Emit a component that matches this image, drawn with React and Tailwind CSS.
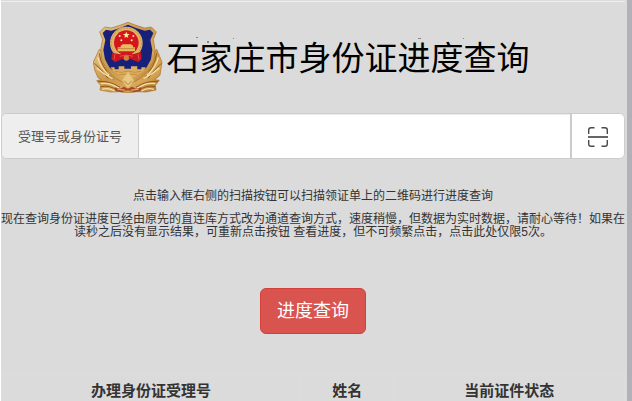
import React, { useState } from "react";

const columns = [
  { name: "办理身份证受理号", width: "w-[48%]" },
  { name: "姓名", width: "w-[15%]" },
  { name: "当前证件状态", width: "w-[37%]" },
];

const Emblem = () => (
  <svg viewBox="39 36 210 213" className="h-[71px] w-[70px] shrink-0" aria-hidden="true">
    <defs>
      <linearGradient id="gold" x1="0" y1="0" x2="1" y2="1">
        <stop offset="0" stopColor="#e6c48a" />
        <stop offset="0.45" stopColor="#c9974a" />
        <stop offset="0.7" stopColor="#d9aa5c" />
        <stop offset="1" stopColor="#a8661c" />
      </linearGradient>
    </defs>
    {/* branches on both sides */}
    <path
      d="M58 118 L40 156 L44 180 L54 203 L64 209 L50 212 L62 226 L60 240 L92 246 L120 245 L144 249 L168 245 L198 246 L228 240 L226 226 L238 211 L224 209 L240 196 L246 156 L230 118 L205 150 L144 190 L82 150Z"
      fill="url(#gold)"
      stroke="#a86f28"
      strokeWidth="2"
    />
    <g fill="none" stroke="#8f5716" strokeWidth="3">
      <path d="M58 130 Q62 170 100 208 M44 160 Q66 180 84 205 M54 214 Q90 212 120 232 M62 230 Q90 224 112 242" />
      <path d="M230 130 Q226 170 188 208 M244 160 Q222 180 204 205 M234 214 Q198 212 168 232 M226 230 Q198 224 176 242" />
    </g>
    <g fill="none" stroke="#f4dfa8" strokeWidth="4">
      <path d="M53 142 Q60 172 88 196 M50 174 Q70 192 98 206 M62 221 Q90 216 118 236 M66 238 Q84 232 104 243" />
      <path d="M235 142 Q228 172 200 196 M238 174 Q218 192 190 206 M226 221 Q198 216 170 236 M222 238 Q204 232 184 243" />
    </g>
    {/* shield */}
    <path
      d="M144 37 L168 46 L194 54 L214 51 L229 66 L220 88 L225 118 L222 150 L208 180 L180 206 L144 224 L108 206 L80 180 L66 150 L62 118 L68 88 L59 66 L74 51 L94 54 L120 46Z"
      fill="url(#gold)"
      stroke="#a97228"
      strokeWidth="2"
    />
    <path
      d="M144 44 L168 54 L194 62 L210 59 L220 69 L211 90 L217 120 L213 148 L200 172 L176 192 L144 207 L112 192 L88 172 L75 148 L70 120 L76 90 L68 69 L78 59 L94 62 L120 54Z"
      fill="#17217a"
    />
    {/* state emblem */}
    <circle cx="139" cy="99" r="49" fill="#e0b468" />
    <circle cx="139" cy="99" r="45" fill="none" stroke="#b78239" strokeWidth="2" strokeDasharray="6 4" />
    <circle cx="139" cy="98" r="37" fill="#d5171d" />
    <path d="M139 65 L142 72 L149 72 L143 77 L145 84 L139 80 L133 84 L135 77 L129 72 L136 72Z" fill="#ffe7a0" />
    <g fill="#ffe2a0">
      <circle cx="119" cy="78" r="3" />
      <circle cx="160" cy="78" r="3" />
      <circle cx="124" cy="91" r="3" />
      <circle cx="155" cy="91" r="3" />
    </g>
    <path d="M122 107 L128 103 H153 L159 107 V112 H165 V124 H113 V112 H122Z" fill="#e8bd62" />
    <path d="M114 116 H164" stroke="#b06d22" strokeWidth="2" />
    <path d="M96 128 L120 133 L139 129 L158 133 L183 126 L185 146 L176 157 L151 147 L139 151 L127 147 L105 157 L94 147Z" fill="#c91520" />
    <path d="M105 132 L102 149 M174 132 L177 149 M119 139 L139 135 L159 139" stroke="#e75142" strokeWidth="3" fill="none" />
    <circle cx="139" cy="144" r="8" fill="#d5803f" />
    {/* wall and centre of the base */}
    <path d="M92 172 H104 V178 H116 V169 H133 V176 H153 V169 H172 V178 H184 V172 H197 L190 184 L168 199 L144 210 L120 199 L100 184Z" fill="#dcae5e" />
    <path d="M105 184 L124 187 L144 183 L164 187 L184 184 M116 194 L144 192 L172 194" fill="none" stroke="#b98138" strokeWidth="2" />
    <path d="M144 186 L126 212 L144 234 L162 212Z" fill="#e9c981" />
    <path d="M132 212 L144 224 L156 212" fill="none" stroke="#b27a32" strokeWidth="3" />
    <path d="M104 232 L120 236 L132 230 L144 236 L156 230 L168 236 L184 232 L182 243 L163 247 L144 241 L125 247 L106 243Z" fill="#a4482a" />
    <path d="M112 237 L136 241 M176 237 L152 241" stroke="#e3a450" strokeWidth="4" />
  </svg>
);

const ScanIcon = () => (
  <svg viewBox="0 0 20 20" className="h-5 w-5" fill="none" stroke="#4a4a4a" strokeWidth="1.4" aria-hidden="true">
    <path d="M0.7 7V3Q0.7 0.7 3 0.7H6.5 M13.5 0.7H17Q19.3 0.7 19.3 3V7 M0.7 13V17Q0.7 19.3 3 19.3H6.5 M13.5 19.3H17Q19.3 19.3 19.3 17V13" />
    <path d="M0 10H20" strokeWidth="2" stroke="#666666" />
  </svg>
);

const App = () => {
  const [number, setNumber] = useState("");

  return (
    <div className="min-h-screen border-l border-white bg-[#b1b1b7] pr-[5px] font-['Liberation_Sans','Noto_Sans_CJK_SC',sans-serif] text-[#333333]">
      <main className="min-h-screen bg-[#dbdbdb] pt-px pr-0.5">
        <header className="relative flex items-center justify-center gap-1 border-t border-[#efefef] py-5 pr-1">
          <Emblem />
          <h1 className="pt-0.5 text-[33px] leading-10 text-black">石家庄市身份证进度查询</h1>
          {/* specks over the title */}
          <svg viewBox="0 0 270 8" className="absolute top-[34px] left-[195px] h-2 w-[270px]" fill="#888888" aria-hidden="true">
            <path d="M0 1H2V2H0Z M11 5H13V7H11Z M37 2H38V3H37Z M222 2H225V3H222Z M267 2H268V3H267Z" />
          </svg>
        </header>

        <form onSubmit={(e) => e.preventDefault()}>
          <div className="flex h-[46px] overflow-hidden rounded-md border border-[#cccccc] bg-white">
            <label
              htmlFor="number"
              className="flex items-center border-r border-[#cccccc] bg-[#eeeeee] px-4 pt-0.5 text-[13px] text-[#555555]"
            >
              受理号或身份证号
            </label>
            <input
              id="number"
              type="text"
              value={number}
              onChange={(e) => setNumber(e.target.value)}
              className="min-w-0 flex-1 bg-white px-4 text-lg shadow-[inset_0_1px_1px_rgba(0,0,0,0.08)] outline-none"
            />
            <button
              type="button"
              aria-label="扫描"
              className="flex w-[54px] items-center justify-center border-l-2 border-[#cccccc] bg-white pt-0.5"
            >
              <ScanIcon />
            </button>
          </div>

          <div className="pt-[31px] text-center text-xs leading-[13px]">
            <p>点击输入框右侧的扫描按钮可以扫描领证单上的二维码进行进度查询</p>
            <p className="pt-[10px]">
              现在查询身份证进度已经由原先的直连库方式改为通道查询方式，速度稍慢，但数据为实时数据，请耐心等待！如果在读秒之后没有显示结果，可重新点击按钮
              查看进度，但不可频繁点击，点击此处仅限5次。
            </p>
          </div>

          <div className="flex justify-center pt-[49px] pb-10">
            <button
              type="submit"
              className="h-[46px] rounded-md border border-[#d43f3a] bg-[#d9534f] px-4 text-lg leading-6 text-white"
            >
              进度查询
            </button>
          </div>
        </form>

        <table className="w-full table-fixed border-collapse text-[15px] leading-5">
          <thead>
            <tr>
              {columns.map((column) => (
                <th
                  key={column.name}
                  scope="col"
                  className={`${column.width} border border-b-0 border-[#dddddd] pt-1.5 font-bold`}
                >
                  {column.name}
                </th>
              ))}
            </tr>
          </thead>
        </table>
      </main>
    </div>
  );
};

export default App;
